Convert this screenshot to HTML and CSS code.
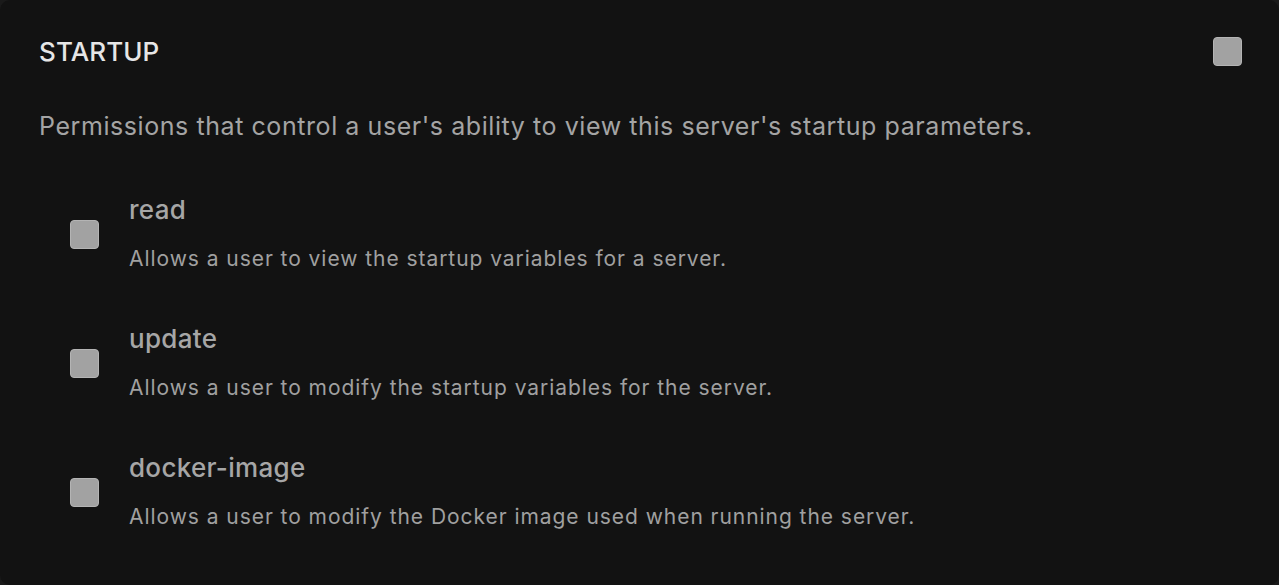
FILE: index.html
```html
<!DOCTYPE html>
<html>
<head>
<meta charset="utf-8">
<link rel="stylesheet" href="styles.css">
</head>
<body>
<div class="card">
  <div class="header">
    <h2 class="title">STARTUP</h2>
    <span class="box"></span>
  </div>
  <p class="desc">Permissions that control a user's ability to view this server's startup parameters.</p>
  <div class="items">
    <div class="item">
      <span class="box"></span>
      <div class="text">
        <div class="name">read</div>
        <div class="info">Allows a user to view the startup variables for a server.</div>
      </div>
    </div>
    <div class="item">
      <span class="box"></span>
      <div class="text">
        <div class="name">update</div>
        <div class="info">Allows a user to modify the startup variables for the server.</div>
      </div>
    </div>
    <div class="item">
      <span class="box"></span>
      <div class="text">
        <div class="name">docker-image</div>
        <div class="info">Allows a user to modify the Docker image used when running the server.</div>
      </div>
    </div>
  </div>
</div>
</body>
</html>
```
FILE: styles.css
```css
html, body {
  margin: 0;
  background: #1a1a1a;
  font-family: Inter, "Noto Sans", sans-serif;
}
.card {
  box-sizing: border-box;
  width: 1279px;
  height: 585px;
  background: #121212;
  border-radius: 10px;
  padding: 37px 37px 0 39px;
}
.header {
  display: flex;
  align-items: center;
  justify-content: space-between;
  height: 29px;
}
.title {
  margin: 0;
  font-size: 26px;
  font-weight: 500;
  color: #e6e6e6;
  letter-spacing: 0.1px;
}
.box {
  display: block;
  width: 27px;
  height: 27px;
  border: 1px solid #b4b4b4;
  background: #a2a2a2;
  border-radius: 4px;
  flex: none;
}
.desc {
  margin: 45px 0 0;
  font-size: 25px;
  color: #a4a4a4;
  letter-spacing: 0.57px;
  line-height: 30px;
}
.items {
  display: flex;
  flex-direction: column;
  gap: 51px;
  margin-top: 54px;
  padding-left: 31px;
}
.item {
  display: flex;
  align-items: center;
  gap: 30px;
}
.text {
  padding-bottom: 1px;
}
.name {
  font-size: 26px;
  font-weight: 500;
  color: #a6a6a6;
  letter-spacing: 0.3px;
  line-height: 30px;
}
.info {
  margin-top: 21px;
  font-size: 21px;
  color: #a0a0a0;
  letter-spacing: 0.95px;
  line-height: 26px;
}
```
